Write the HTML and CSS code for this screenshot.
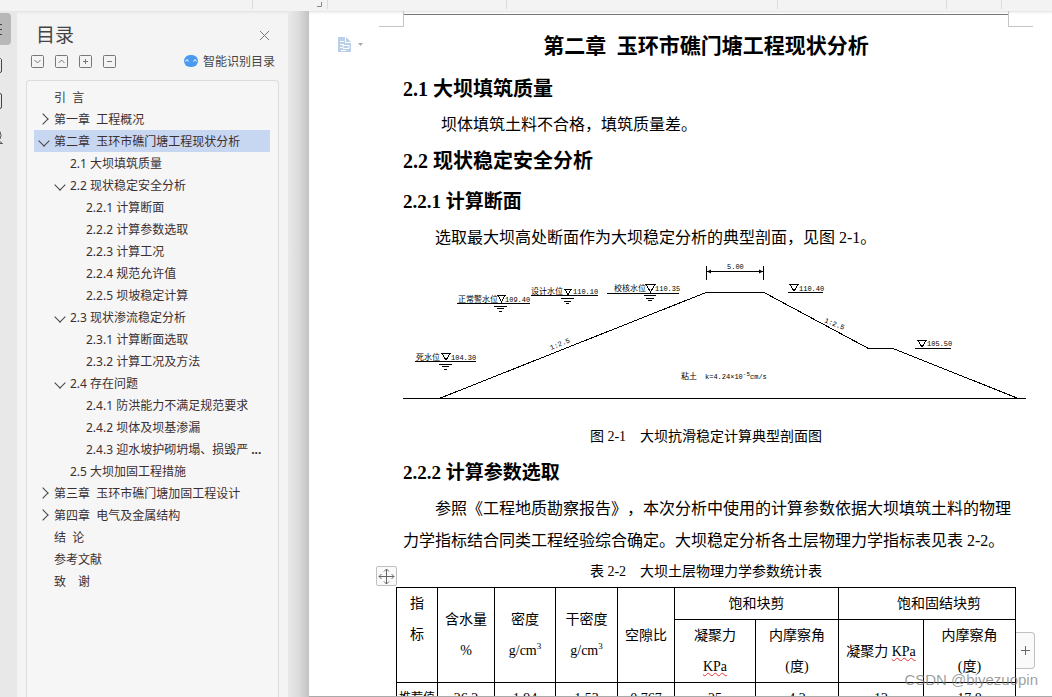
FILE: index.html
```html
<!DOCTYPE html>
<html lang="zh-CN">
<head>
<meta charset="utf-8">
<meta name="viewport" content="width=device-width, initial-scale=1">
<title>第二章 玉环市礁门塘工程现状分析</title>
<link rel="stylesheet" href="styles.css">
</head>
<body>
<div class="app">
  <div class="ribbon">
    <svg class="ribbon__marks" width="1052" height="11" viewBox="0 0 1052 11" aria-hidden="true">
      <path d="M252.500 0V9M327.500 0V9M506.500 0V9M777.500 0V9M946.500 0V9M1001.500 0V9" stroke="#dcdcdc"/>
      <path d="M317 6.500H321.500V2" stroke="#888" fill="none"/>
    </svg>
  </div>

  <div class="workspace">
    <nav class="rail" aria-label="侧边工具">
      <button class="rail__btn rail__btn--on" aria-label="目录"><svg width="8" height="14" viewBox="0 0 8 14"><path d="M0 2.500H2M0 7.500H2M0 12.500H2" stroke="#444"/></svg></button>
      <button class="rail__btn" aria-label="章节"><svg width="8" height="18" viewBox="0 0 8 18"><path d="M-4 2.500H0.500L1.500 3.500V15Q1.500 16.500 0 16.500H-4" stroke="#444" fill="none"/></svg></button>
      <button class="rail__btn" aria-label="书签"><svg width="8" height="18" viewBox="0 0 8 18"><path d="M-4 1.500H0Q1.500 1.500 1.500 3V15Q1.500 16.500 0 16.500H-4" stroke="#444" fill="none"/></svg></button>
      <button class="rail__btn" aria-label="查找"><svg width="8" height="18" viewBox="0 0 8 18"><path d="M0 3.500Q2 8 0 11M-2 12L2.500 15.500H-2" stroke="#555" fill="none"/></svg></button>
    </nav>

    <aside class="panel">
      <header class="panel__head">
        <h2 class="panel__title">目录</h2>
        <button class="icon-btn" aria-label="关闭"><svg width="11" height="11" viewBox="0 0 11 11"><path d="M1 1L10 10M10 1L1 10" stroke="#777"/></svg></button>
      </header>
      <div class="panel__tools">
        <button class="icon-btn" aria-label="展开"><svg width="13" height="13" viewBox="0 0 13 13"><rect x=".5" y=".5" width="12" height="12" rx="1"/><path d="M3.500 5L6.500 8L9.500 5"/></svg></button>
        <button class="icon-btn" aria-label="收起"><svg width="13" height="13" viewBox="0 0 13 13"><rect x=".5" y=".5" width="12" height="12" rx="1"/><path d="M3.500 8L6.500 5L9.500 8"/></svg></button>
        <button class="icon-btn" aria-label="增加级别"><svg width="13" height="13" viewBox="0 0 13 13"><rect x=".5" y=".5" width="12" height="12" rx="1"/><path d="M4 6.500H9M6.500 4V9"/></svg></button>
        <button class="icon-btn" aria-label="减少级别"><svg width="13" height="13" viewBox="0 0 13 13"><rect x=".5" y=".5" width="12" height="12" rx="1"/><path d="M4 6.500H9"/></svg></button>
        <a class="smart" href="#smart"><svg width="14" height="12" viewBox="0 0 14 12"><rect width="14" height="12" rx="6" fill="#4a9af0"/><path d="M1.500 6.500L3 4.500L4.500 6.500M9.500 6.500L11 4.500L12.500 6.500" stroke="#fff" fill="none"/></svg>智能识别目录</a>
      </div>
      <ul class="tree">
        <li><a class="row" href="#s"><i class="tw"></i>引&nbsp; 言</a></li>
        <li><a class="row" href="#s"><i class="tw tw--shut"></i>第一章&nbsp; 工程概况</a></li>
        <li><a class="row row--on" href="#s"><i class="tw tw--open"></i>第二章&nbsp; 玉环市礁门塘工程现状分析</a></li>
        <li><a class="row row--2" href="#s"><i class="tw"></i>2.1 大坝填筑质量</a></li>
        <li><a class="row row--2" href="#s"><i class="tw tw--open"></i>2.2 现状稳定安全分析</a></li>
        <li><a class="row row--3" href="#s"><i class="tw"></i>2.2.1 计算断面</a></li>
        <li><a class="row row--3" href="#s"><i class="tw"></i>2.2.2 计算参数选取</a></li>
        <li><a class="row row--3" href="#s"><i class="tw"></i>2.2.3 计算工况</a></li>
        <li><a class="row row--3" href="#s"><i class="tw"></i>2.2.4 规范允许值</a></li>
        <li><a class="row row--3" href="#s"><i class="tw"></i>2.2.5 坝坡稳定计算</a></li>
        <li><a class="row row--2" href="#s"><i class="tw tw--open"></i>2.3 现状渗流稳定分析</a></li>
        <li><a class="row row--3" href="#s"><i class="tw"></i>2.3.1 计算断面选取</a></li>
        <li><a class="row row--3" href="#s"><i class="tw"></i>2.3.2 计算工况及方法</a></li>
        <li><a class="row row--2" href="#s"><i class="tw tw--open"></i>2.4 存在问题</a></li>
        <li><a class="row row--3" href="#s"><i class="tw"></i>2.4.1 防洪能力不满足规范要求</a></li>
        <li><a class="row row--3" href="#s"><i class="tw"></i>2.4.2 坝体及坝基渗漏</a></li>
        <li><a class="row row--3" href="#s"><i class="tw"></i>2.4.3 迎水坡护砌坍塌、损毁严<b>...</b></a></li>
        <li><a class="row row--2" href="#s"><i class="tw"></i>2.5 大坝加固工程措施</a></li>
        <li><a class="row" href="#s"><i class="tw tw--shut"></i>第三章&nbsp; 玉环市礁门塘加固工程设计</a></li>
        <li><a class="row" href="#s"><i class="tw tw--shut"></i>第四章&nbsp; 电气及金属结构</a></li>
        <li><a class="row" href="#s"><i class="tw"></i>结&nbsp; 论</a></li>
        <li><a class="row" href="#s"><i class="tw"></i>参考文献</a></li>
        <li><a class="row" href="#s"><i class="tw"></i>致　谢</a></li>
      </ul>
    </aside>

    <div class="gutter"></div>

    <main class="page">
      <button class="page-menu" aria-label="页面选项">
        <svg width="26" height="16" viewBox="0 0 26 16"><path d="M0 0H8L13 5V15H0Z" fill="#bccfe9"/><path d="M7.500 0V5.500H13M2 4.500H6M2 7.500H6M2 10.500H4M5 8.500H11V11.500H5ZM3 13.500H8" stroke="#fff" fill="none"/><path d="M20 6H25L22.500 9Z" fill="#aaa"/></svg>
      </button>
      <article class="doc">
        <div class="margin-top"></div>
        <h1 class="title">第二章&nbsp; 玉环市礁门塘工程现状分析</h1>
        <h2 class="h2">2.1 大坝填筑质量</h2>
        <p class="text text--deep">坝体填筑土料不合格，填筑质量差。</p>
        <h2 class="h2">2.2 现状稳定安全分析</h2>
        <h3 class="h3">2.2.1 计算断面</h3>
        <p class="text">选取最大坝高处断面作为大坝稳定分析的典型剖面，见图 2-1。</p>
        <figure class="figure">
          <svg class="section" viewBox="403 254 623 167" role="img" aria-label="大坝典型剖面">
            <g class="section__line">
              <path d="M403 398.500H1026M440.500 398L706 292.500H764L868.500 348.500H893L1017 398"/>
              <path d="M706.500 266V280M763.500 266V280M706.500 271.500H763.500"/>
              <path d="M457 303.500H530M531 295.500H598M607 293.500H679M415 361.500H476M788 292.500H823M915 348.500H951"/>
              <path d="M494 306.500H507M497 308.500H504M499 311.500H502M561 298.500H574M564 301.500H571M566 303.500H569M644 295.500H656M646 298.500H654M648 300.500H652M439 364.500H452M442 366.500H449M444 369.500H447"/>
              <path d="M498 295.500H505L501.500 302ZM565 289.500H571L568 295ZM646 284.500H655L650.500 292ZM442 353.500H450L446 360ZM790 284.500H798L794 291ZM918 340.500H926L922 347Z"/>
            </g>
            <path d="M707 271.500L711 269.500V273.500ZM763 271.500L759 269.500V273.500Z"/>
            <g class="section__text">
              <text x="458" y="302">正常警水位</text>
              <text x="531" y="294">设计水位</text>
              <text x="614" y="291">校核水位</text>
              <text x="416" y="360">死水位</text>
              <text x="681" y="379">粘土</text>
            </g>
            <g class="section__num">
              <text x="505" y="302">109.40</text>
              <text x="573" y="294">110.10</text>
              <text x="655" y="291">110.35</text>
              <text x="451" y="360">104.30</text>
              <text x="799" y="291">110.40</text>
              <text x="927" y="346">105.50</text>
              <text x="727" y="269">5.00</text>
              <text x="705" y="379">k=4.24×10<tspan class="section__sup" dy="-3">-5</tspan><tspan dy="3">cm/s</tspan></text>
              <text transform="translate(551 350) rotate(-22)">1:2.5</text>
              <text transform="translate(824 322) rotate(22)">1:2.5</text>
            </g>
          </svg>
          <figcaption class="caption">图 2-1　大坝抗滑稳定计算典型剖面图</figcaption>
        </figure>
        <h3 class="h3 h3--tall">2.2.2 计算参数选取</h3>
        <p class="text">参照《工程地质勘察报告》，本次分析中使用的计算参数依据大坝填筑土料的物理力学指标结合同类工程经验综合确定。大坝稳定分析各土层物理力学指标表见表 2-2。</p>
        <p class="caption caption--table">表 2-2　大坝土层物理力学参数统计表</p>
        <div class="table-wrap">
          <button class="handle" aria-label="移动表格"><svg width="17" height="17" viewBox="0 0 17 17"><path d="M8.500 1V16M1 8.500H16M6 3.500L8.500 1L11 3.500M6 13.500L8.500 16L11 13.500M3.500 6L1 8.500L3.500 11M13.500 6L16 8.500L13.500 11" stroke="#666" fill="none"/></svg></button>
          <button class="add-col" aria-label="添加列"><svg width="9" height="9" viewBox="0 0 9 9"><path d="M0 4.500H9M4.500 0V9" stroke="#666"/></svg></button>
          <table class="data">
            <colgroup><col class="c1"><col class="c2"><col class="c3"><col class="c4"><col class="c5"><col class="c6"><col class="c7"><col class="c8"><col class="c9"></colgroup>
            <thead>
              <tr class="data__top">
                <th rowspan="2" class="top">指<br>标</th>
                <th rowspan="2">含水量<br>%</th>
                <th rowspan="2">密度<br>g/cm<sup>3</sup></th>
                <th rowspan="2">干密度<br>g/cm<sup>3</sup></th>
                <th rowspan="2">空隙比</th>
                <th colspan="2">饱和块剪</th>
                <th colspan="2" class="shift">饱和固结块剪</th>
              </tr>
              <tr>
                <th>凝聚力<br><span class="typo">KPa</span></th>
                <th>内摩察角<br>(度)</th>
                <th>凝聚力 <span class="typo">KPa</span></th>
                <th>内摩察角<br>(度)</th>
              </tr>
            </thead>
            <tbody>
              <tr><th class="small">推荐值</th><td>26.2</td><td>1.94</td><td>1.53</td><td>0.767</td><td>25</td><td>4.2</td><td>12</td><td>17.8</td></tr>
            </tbody>
          </table>
        </div>
      </article>
    </main>
  </div>
  <div class="watermark">CSDN @biyezuopin</div>
</div>
</body>
</html>
```
FILE: styles.css
```css
* { box-sizing: border-box; }

body {
  margin: 0;
  color: #000;
  font-family: "Liberation Serif", "Noto Sans CJK SC", serif;
}

h1, h2, h3, p, ul, figure { margin: 0; padding: 0; }

button {
  padding: 0;
  border: 0;
  background: none;
  cursor: pointer;
}

svg { display: block; }

.app {
  position: relative;
  display: flex;
  flex-direction: column;
  height: 100vh;
  overflow: hidden;
}

.ribbon {
  flex: none;
  height: 11px;
  overflow: hidden;
  background: #f3f3f3;
}

.workspace {
  display: flex;
  flex: 1;
  min-height: 0;
  background: #f4f4f4;
}

.rail {
  flex: none;
  display: flex;
  flex-direction: column;
  gap: 4px;
  width: 17px;
  padding-top: 2px;
  background: #e8e8e8;
}

.rail__btn {
  display: flex;
  align-items: center;
  width: 11px;
  height: 32px;
  border-radius: 0 4px 4px 0;
}

.rail__btn--on { background: #b8b8b8; }

.panel {
  flex: none;
  display: flex;
  flex-direction: column;
  width: 271px;
  padding: 12px 9px 0;
  box-shadow: inset 0 3px 3px -2px #ddd;
  color: #3d2f2f;
  font-family: "Noto Sans", "Noto Sans CJK SC", sans-serif;
  font-size: 12px;
}

.panel__head {
  display: flex;
  align-items: center;
  justify-content: space-between;
  height: 24px;
  padding: 0 9px 0 10px;
}

.panel__title {
  color: #444;
  font-size: 19px;
  font-weight: 400;
  line-height: 24px;
}

.panel__tools {
  display: flex;
  align-items: center;
  gap: 11px;
  height: 28px;
  padding: 0 4px 0 5px;
}

.panel__tools .icon-btn svg {
  fill: none;
  stroke: #777;
}

.smart {
  display: flex;
  align-items: center;
  gap: 5px;
  margin-left: auto;
  color: #444;
  text-decoration: none;
}

.tree {
  flex: 1;
  margin-top: 5px;
  padding: 5px 8px 0 7px;
  border: 1px solid #dcdcdc;
  border-bottom: 0;
  border-radius: 4px 4px 0 0;
  background: #f6f6f6;
  list-style: none;
}

.row {
  display: flex;
  align-items: center;
  height: 22px;
  padding-top: 2px;
  padding-left: 2px;
  color: inherit;
  line-height: 20px;
  white-space: nowrap;
  text-decoration: none;
}

.row--2 { padding-left: 18px; }
.row--3 { padding-left: 34px; }
.row--on { background: #c7d6f1; }
.row b { margin-left: 3px; }

.tw {
  flex: none;
  display: flex;
  align-items: center;
  justify-content: center;
  width: 14px;
  height: 14px;
  margin-right: 4px;
  margin-bottom: 2px;
}

.tw--shut::before,
.tw--open::before {
  content: "";
  width: 7px;
  height: 7px;
  border: solid #444;
  border-width: 1px 1px 0 0;
  transform: rotate(45deg);
}

.tw--open { width: 16px; margin-right: 2px; }
.tw--open::before { transform: rotate(135deg); }

.gutter {
  flex: none;
  width: 21px;
  background: linear-gradient(to right, #e9e9e9, #dcdcdc 50%, #c2c2c2);
}

.page {
  position: relative;
  flex: 1;
  min-width: 0;
  padding: 0 43px 0 94px;
  overflow: hidden;
  border-bottom: 1px solid #aaa;
  background: #fff;
  box-shadow: inset 0 3px 3px -2px #ddd;
}

.page-menu {
  position: absolute;
  top: 26px;
  left: 29px;
}

.margin-top {
  position: relative;
  height: 14px;
  background: linear-gradient(#777, #777) 0 3px / 100% 1px no-repeat;
}

.margin-top::before,
.margin-top::after {
  content: "";
  position: absolute;
  top: 0;
  width: 24px;
  height: 15px;
  border-bottom: 1px solid #c4c4c4;
}

.margin-top::before { right: calc(100% - 1px); border-right: 1px solid #c4c4c4; }
.margin-top::after { left: calc(100% - 1px); border-left: 1px solid #c4c4c4; }

.title {
  padding-bottom: 1px;
  font-size: 21px;
  line-height: 42px;
  text-align: center;
}

.h2 { font-size: 20px; line-height: 42px; }
.h3 { font-size: 19px; line-height: 40px; }
.h3--tall { line-height: 41px; }

.text {
  margin-right: -4px;
  font-size: 16px;
  line-height: 32px;
  text-indent: 32px;
  text-spacing-trim: space-all;
}

.text--deep {
  line-height: 30px;
  text-indent: 38px;
}

.figure { margin-right: -17px; }
.section { width: 100%; }

.section__line {
  fill: none;
  stroke: #000;
  shape-rendering: crispEdges;
}

.section__text {
  font-family: "Noto Sans CJK SC", sans-serif;
  font-size: 8px;
}

.section__num {
  font-family: "Liberation Mono", monospace;
  font-size: 7px;
}

.section__sup { font-size: 6px; }

.caption {
  font-size: 14px;
  line-height: 31px;
  text-align: center;
}

.caption--table { line-height: 30px; }

.figure .caption { margin-right: 17px; }

.table-wrap {
  position: relative;
  margin: 0 -7px;
}

.handle,
.add-col {
  position: absolute;
  display: flex;
  align-items: center;
  justify-content: center;
  border: 1px solid #c0c0c0;
  background: #fafafa;
}

.handle {
  top: -21px;
  left: -20px;
  width: 21px;
  height: 20px;
  border-radius: 2px;
}

.add-col {
  top: 45px;
  left: 100%;
  width: 19px;
  height: 37px;
  border-left: 0;
  border-radius: 0 4px 4px 0;
}

.data {
  width: 100%;
  border-collapse: collapse;
  table-layout: fixed;
  font-size: 14px;
  line-height: 31px;
}

.data th,
.data td {
  height: 31px;
  padding: 0;
  border: 1px solid #000;
  font-weight: 400;
  text-align: center;
  white-space: nowrap;
}

.data .top { vertical-align: top; }
.data .shift { padding-left: 24px; }
.data .small { font-size: 12px; }

.data sup {
  font-size: 9px;
  line-height: 0;
}

.c1 { width: 41px; }
.c2 { width: 57px; }
.c3 { width: 61px; }
.c4 { width: 62px; }
.c5 { width: 57px; }
.c6 { width: 81px; }
.c7 { width: 83px; }
.c8 { width: 85px; }
.c9 { width: 92px; }

.typo { text-decoration: underline wavy #e33 1px; }

.watermark {
  position: absolute;
  right: 14px;
  bottom: 8px;
  color: rgba(125, 125, 125, 0.75);
  font-family: "Liberation Sans", sans-serif;
  font-size: 15px;
  line-height: 18px;
}
```
